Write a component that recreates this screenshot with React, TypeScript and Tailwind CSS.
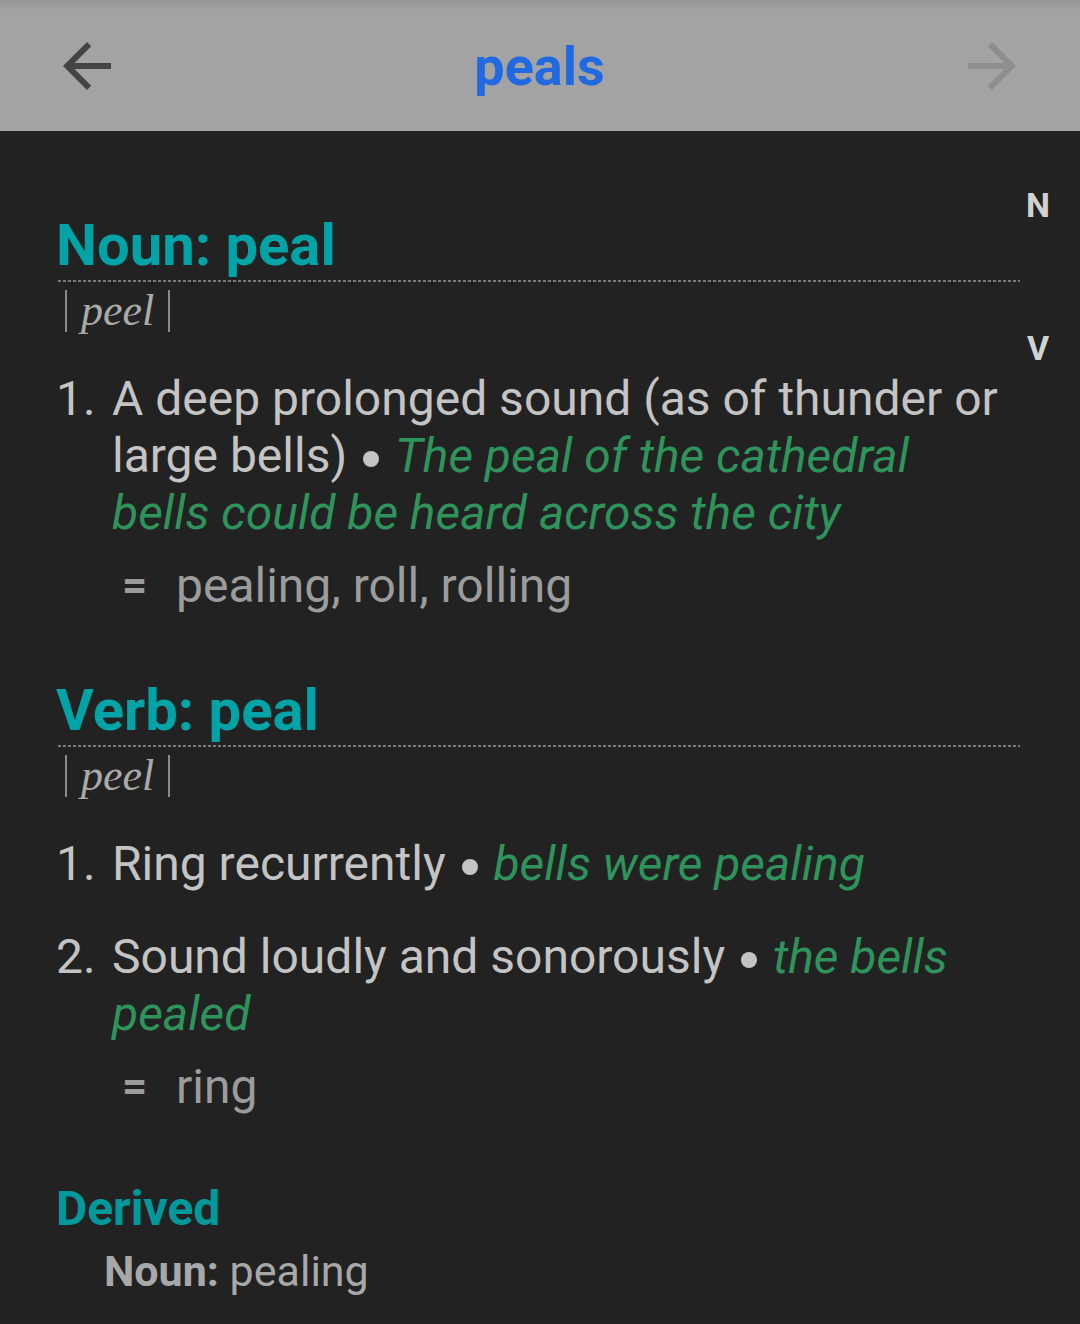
type Sense = {
  n: number;
  def: string;
  example: string;
  syn?: string;
};

const sections: { pos: string; senses: Sense[] }[] = [
  {
    pos: 'Noun',
    senses: [
      {
        n: 1,
        def: 'A deep prolonged sound (as of thunder or large bells)',
        example: 'The peal of the cathedral bells could be heard across the city',
        syn: 'pealing, roll, rolling',
      },
    ],
  },
  {
    pos: 'Verb',
    senses: [
      { n: 1, def: 'Ring recurrently', example: 'bells were pealing' },
      { n: 2, def: 'Sound loudly and sonorously', example: 'the bells pealed', syn: 'ring' },
    ],
  },
];

// material-style arrows
function Arrow({ dir, color }: { dir: 'left' | 'right'; color: string }) {
  return (
    <svg width="72" height="72" viewBox="0 0 24 24" className={dir === 'right' ? 'rotate-180' : ''}>
      <path fill={color} d="M20 11H7.83l5.59-5.59L12 4l-8 8 8 8 1.41-1.41L7.83 13H20v-2z" />
    </svg>
  );
}

function Dotted() {
  return (
    <div className="mt-[3px] ml-[2px] h-[2px] w-[962px] bg-[repeating-linear-gradient(to_right,#7a7a7a_0_3px,transparent_3px_5px)]" />
  );
}

function Pron() {
  return (
    <div className="mt-[6px] flex items-center h-[46px] pl-[9px] leading-none">
      <span className="block w-[2px] h-[42px] bg-[#8a8a8a]" />
      <span className="px-[14px] italic text-[#aaaaaa] font-['Liberation_Serif',serif] text-[44px]">peel</span>
      <span className="block w-[2px] h-[42px] bg-[#8a8a8a]" />
    </div>
  );
}

function SenseRow({ s }: { s: Sense }) {
  return (
    <div className="mt-[36px]">
      <div className="flex text-[48px] leading-[57px] text-[#c4c4c4]">
        <span className="w-[56px] shrink-0">{s.n}.</span>
        <p>
          {s.def}{' '}
          <span className="inline-block w-[16px] h-[16px] mx-[4px] rounded-full bg-[#c4c4c4] align-middle" />{' '}
          <span className="italic text-[#2f935c]">{s.example}</span>
        </p>
      </div>
      {s.syn ? (
        <div className="flex items-center mt-[16px] pl-[66px] text-[48px] leading-[57px] text-[#9c9c9c]">
          <span className="w-[54px] text-[44px] font-bold">=</span>
          <span>{s.syn}</span>
        </div>
      ) : null}
    </div>
  );
}

export default function App() {
  return (
    <div className="w-[1080px] h-[1324px] overflow-hidden bg-[#222222] font-['Roboto',sans-serif]">
      <header className="h-[131px] bg-[linear-gradient(to_bottom,#969696_0px,#a3a3a3_10px)] flex items-center justify-between pl-[51px] pr-[52px]">
        <Arrow dir="left" color="#444444" />
        <h1 className="text-[54px] font-bold text-[#2169e0] leading-none pt-[3px]">peals</h1>
        <Arrow dir="right" color="#8e8e8e" />
      </header>
      <div className="flex">
        <main className="w-[962px] ml-[56px] pt-[82px]">
          {sections.map((sec, i) => (
            <section key={sec.pos} className={i > 0 ? 'mt-[64px]' : ''}>
              <h2 className="text-[58px] font-bold text-[#00a4a6] leading-[64px]">
                {sec.pos}: peal
              </h2>
              <Dotted />
              <Pron />
              {sec.senses.map((s) => (
                <SenseRow key={s.n} s={s} />
              ))}
            </section>
          ))}
          <section className="mt-[66px]">
            <h3 className="text-[48px] font-bold text-[#00999b] leading-[56px]">Derived</h3>
            <p className="mt-[8px] pl-[48px] text-[43px] leading-[52px] text-[#a8a8a8]">
              <span className="font-bold">Noun:</span> pealing
            </p>
          </section>
        </main>
        <aside className="flex-1 flex flex-col items-center pr-[22px] pt-[54px] gap-[103px] text-[34px] font-bold text-[#d2d2d2] leading-[40px]">
          <span>N</span>
          <span>V</span>
        </aside>
      </div>
    </div>
  );
}
